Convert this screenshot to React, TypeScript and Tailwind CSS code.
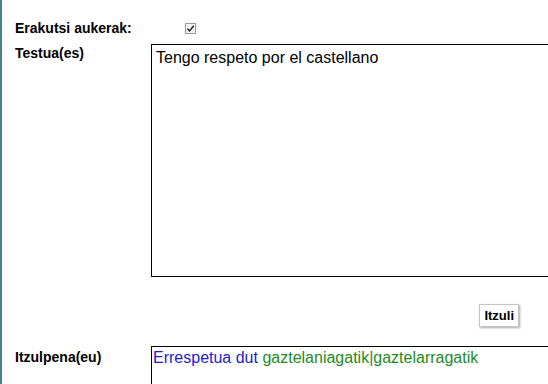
import React from 'react';

export default function App() {
  return (
    <div className="h-[384px] w-[548px] overflow-hidden bg-white font-['Liberation_Sans',Arial,sans-serif] text-black">
      <div className="h-full border-l-2 border-[#4a7f8c] pl-[13px] pt-[18px]">
        {/* options row */}
        <div className="flex h-[20px] items-center">
          <span className="w-[170px] shrink-0 text-[14px] font-bold">Erakutsi aukerak:</span>
          <span className="flex h-[11px] w-[11px] items-center justify-center border border-[#9a9a9a] bg-[#f4f4f4]">
            <svg viewBox="0 0 10 10" className="h-[9px] w-[9px]">
              <path d="M1.5 5.2 L4 7.6 L8.6 2" fill="none" stroke="#222" strokeWidth="1.6" />
            </svg>
          </span>
        </div>

        {/* source text */}
        <div className="mt-[6px] flex">
          <label className="w-[136px] shrink-0 text-[14px] font-bold leading-[18px]">Testua(es)</label>
          <div className="h-[233px] w-[420px] shrink-0 border border-black px-[4px] pt-[4px] text-[16px] leading-[18px]">
            Tengo respeto por el castellano
          </div>
        </div>

        {/* action */}
        <div className="mt-[27px] flex w-[504px] justify-end">
          <button className="h-[23px] border border-[#c4c4c4] bg-white px-[4px] text-[13px] font-bold shadow-[1px_1px_2px_rgba(0,0,0,0.35)]">
            Itzuli
          </button>
        </div>

        {/* translation */}
        <div className="mt-[19px] flex">
          <label className="w-[136px] shrink-0 pt-[2px] text-[14px] font-bold leading-[18px]">Itzulpena(eu)</label>
          <div className="h-[60px] w-[420px] shrink-0 border border-black px-[1px] pt-[2px] text-[16px] leading-[18px]">
            <span className="text-[#1c1cd0]">Errespetua dut </span>
            <span className="text-[#1f8a1f]">gaztelaniagatik|gaztelarragatik</span>
          </div>
        </div>
      </div>
    </div>
  );
}
